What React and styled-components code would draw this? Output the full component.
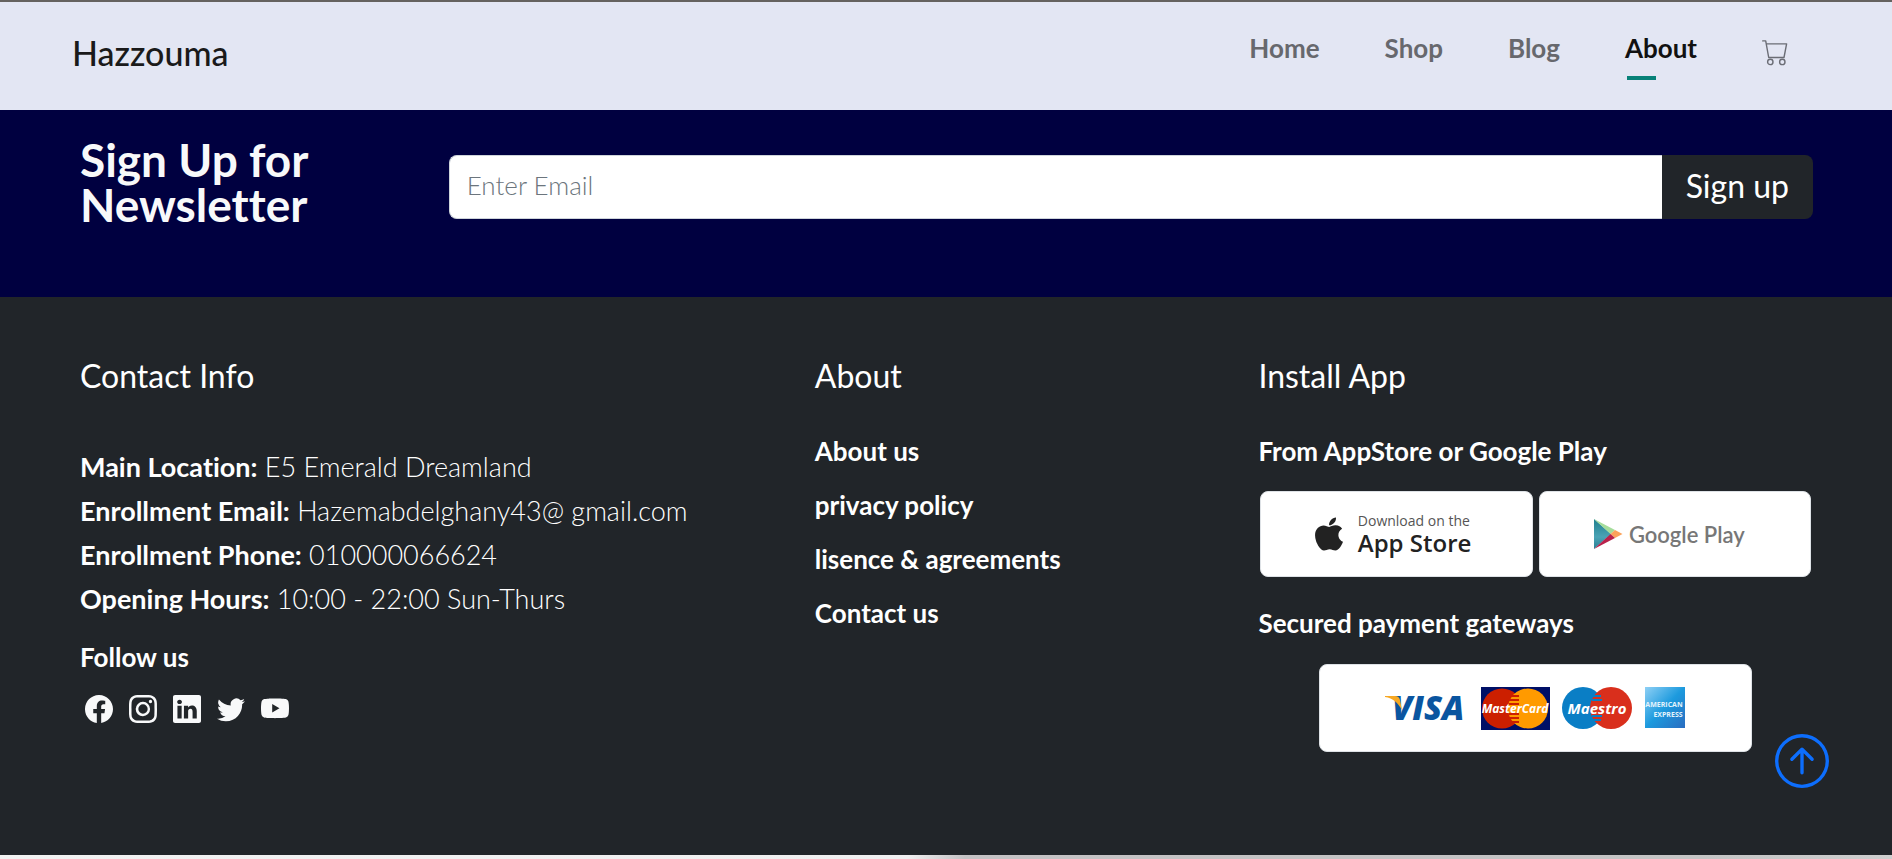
import React from 'react';
import styled, { createGlobalStyle } from 'styled-components';
import { BsFacebook, BsInstagram, BsLinkedin, BsTwitter, BsYoutube, BsArrowUpCircle } from 'react-icons/bs';
import { FaApple } from 'react-icons/fa';

const GlobalStyle = createGlobalStyle`
  *, *::before, *::after { box-sizing: border-box; }
  body {
    margin: 0;
    background: #212529;
    color: #fff;
    font-family: Lato, "Liberation Sans", sans-serif;
    font-size: 26px;
    font-variant-ligatures: none;
  }
  h1, h2, h3, p, ul { margin: 0; padding: 0; font-size: inherit; font-weight: inherit; }
  ul { list-style: none; }
  a { color: inherit; text-decoration: none; }
  button, input { font-family: inherit; }
`;

const Header = styled.header`
  display: flex;
  align-items: center;
  justify-content: space-between;
  padding: 26px 104px 32px 72px;
  border-top: 2px solid #65625f;
  background: #e3e6f3;
`;

const Brand = styled.a`
  color: #1a1a1a;
  font-size: 34px;
  font-weight: 500;
  line-height: 50px;
`;

const Nav = styled.nav`
  display: flex;
  align-items: center;
  gap: 65px;
`;

const NavLink = styled.a`
  position: relative;
  padding-bottom: 10px;
  color: ${(p) => (p.$active ? '#111' : '#67686d')};
  font-weight: 700;
  line-height: 40px;

  &::after {
    content: '';
    display: ${(p) => (p.$active ? 'block' : 'none')};
    position: absolute;
    left: 2px;
    bottom: -2px;
    width: 29px;
    height: 4px;
    background: #088178;
  }
`;

const CartLink = styled.a`
  display: flex;
  color: #6b6d75;
`;

const Newsletter = styled.section`
  display: grid;
  grid-template-columns: 10fr 37fr;
  align-items: start;
  padding: 27px 79px 70px 80px;
  background: #000040;
`;

const NewsletterTitle = styled.h1`
  color: #f8f9fa;
  font-size: 46px;
  font-weight: 700;
  line-height: 45px;
`;

const SignupForm = styled.form`
  display: flex;
  height: 64px;
  margin-top: 18px;
`;

const EmailInput = styled.input`
  flex: 1;
  min-width: 0;
  padding: 0 17px 4px;
  border: 1px solid #ced4da;
  border-right: 0;
  border-radius: 8px 0 0 8px;
  background: #fff;
  color: #212529;
  font-size: 26px;

  &::placeholder { color: #6c757d; font-weight: 300; opacity: 1; }
`;

const SignupButton = styled.button`
  padding: 0 24px 4px;
  border: 0;
  border-radius: 0 8px 8px 0;
  background: #212529;
  color: #fff;
  font-size: 32px;
`;

const Footer = styled.footer`
  display: grid;
  grid-template-columns: 53fr 32fr 40fr;
  padding: 60px 79px 103px 80px;
  background: #212529;
`;

const Heading = styled.h2`
  margin-bottom: ${(p) => (p.$spaced ? 50 : 29)}px;
  font-size: 32px;
  line-height: 38px;
`;

const ContactLine = styled.p`
  font-size: 27px;
  font-weight: 300;
  line-height: 44px;

  strong { font-weight: 700; }
`;

const FollowTitle = styled.h3`
  margin: 20px 0 22px;
  font-weight: 700;
  line-height: 32px;
`;

const Socials = styled.div`
  display: flex;
  gap: 16px;
  padding-left: 5px;

  a { display: flex; color: #f8f9fa; }
`;

const LinkItem = styled.li`
  font-weight: 700;
  line-height: 54px;
`;

const SubHeading = styled.h3`
  font-weight: 700;
  line-height: 54px;
`;

const Badges = styled.div`
  display: flex;
  gap: 6px;
  margin: 13px 2px 19px;
`;

const Badge = styled.a`
  display: flex;
  flex: 1;
  align-items: center;
  justify-content: center;
  gap: ${(p) => p.$gap}px;
  height: 86px;
  padding-right: 12px;
  border: 1px solid #dee2e6;
  border-radius: 8px;
  background: #fff;
  color: #222;
`;

const StoreText = styled.span`
  display: flex;
  flex-direction: column;
  font-family: "Open Sans", sans-serif;
`;

const StoreSmall = styled.span`
  color: #555;
  font-size: 14px;
  line-height: 18px;
`;

const StoreName = styled.span`
  font-size: 24px;
  font-weight: 600;
  line-height: 26px;
`;

const PlayName = styled.span`
  color: #777;
  font-size: 22px;
  font-weight: 600;
`;

const Payments = styled.div`
  display: flex;
  align-items: center;
  justify-content: center;
  width: 78%;
  height: 88px;
  margin: 14px auto 0;
  border: 1px solid #dee2e6;
  border-radius: 8px;
  background: #fff;
`;

const ToTop = styled.button`
  display: flex;
  position: fixed;
  right: 63px;
  bottom: 71px;
  padding: 0;
  border: 0;
  background: none;
  color: #0d6efd;
`;

const PageEdge = styled.div`
  height: 4px;
  background: linear-gradient(90deg, #f2f2f2 0%, #f0eff0 48%, #c4c2c4 51%, #c4c4c4 90%, #cecece 100%);
`;

function CartIcon() {
  return (
    <svg width="26" height="26" viewBox="0 0 26 26" fill="none" stroke="currentColor" strokeWidth="1.4" strokeLinecap="round" strokeLinejoin="round">
      <path d="M.7.9h3l3 16.6H22l2.6-13.6H4.3" />
      <circle cx="8.3" cy="21.9" r="2.7" />
      <circle cx="20.3" cy="21.9" r="2.7" />
    </svg>
  );
}

function PlayIcon() {
  return (
    <svg width="30" height="32" viewBox="0 0 30 32">
      <defs>
        <linearGradient id="playTeal" x1="0" y1="0" x2="0" y2="1">
          <stop offset="0" stopColor="#1f7f8d" />
          <stop offset="0.6" stopColor="#4aa3b5" />
          <stop offset="1" stopColor="#2b7f94" />
        </linearGradient>
      </defs>
      <path d="M1 1v30l17-15z" fill="url(#playTeal)" />
      <path d="M1 1l21 11-4.500 4z" fill="#a5dd9b" />
      <path d="M22 12l7.500 4-7.500 4-4.500-4z" fill="#fba35c" />
      <path d="M1 31l16.500-15 4.500 4z" fill="#b9214b" />
    </svg>
  );
}

const CardName = styled.text`
  fill: #fff;
  font-family: "Open Sans", sans-serif;
  font-size: ${(p) => p.$size}px;
  font-style: italic;
  font-weight: 700;
  text-anchor: middle;
`;

const VisaName = styled(CardName)`
  fill: #0a55a0;
  font-weight: 800;
  text-anchor: start;
`;

const AmexName = styled(CardName)`
  fill: #e4f3fc;
  font-style: normal;
`;

function CardLogos() {
  return (
    <svg width="302" height="44" viewBox="0 0 302 44" role="img" aria-label="Visa, MasterCard, Maestro, American Express">
      <defs>
        <linearGradient id="amex" x1="0" y1="0" x2="1" y2="1">
          <stop offset="0" stopColor="#8fd0f5" />
          <stop offset="0.5" stopColor="#1c9ade" />
          <stop offset="1" stopColor="#2a6cc0" />
        </linearGradient>
      </defs>
      <VisaName x="7" y="34" $size={33}>VISA</VisaName>
      <path d="M0 10h10c3 0 4 1 5 4l2 10C13 17 8 12 0 11z" fill="#f7a823" />

      <rect x="96" y="1" width="69" height="43" fill="#000f66" />
      <circle cx="117" cy="22.500" r="20" fill="#cc1f00" />
      <circle cx="143" cy="22.500" r="20" fill="#ff9a00" />
      <path d="M126 10h8M124 14h10M124 18h10M124 28h10M124 32h10M126 36h8" stroke="#cc1f00" strokeWidth="2" />
      <CardName x="130" y="27" $size={12}>MasterCard</CardName>

      <circle cx="198" cy="22" r="21" fill="#0a7ec5" />
      <circle cx="226" cy="22" r="21" fill="#d92f1c" />
      <path d="M208 10h8M207 14h10M207 30h10M208 34h8" stroke="#0a7ec5" strokeWidth="2" />
      <CardName x="212" y="28" $size={15}>Maestro</CardName>

      <rect x="260" y="1" width="40" height="41" fill="url(#amex)" />
      <AmexName x="279" y="21" $size={7}>AMERICAN</AmexName>
      <AmexName x="283" y="31" $size={7}>EXPRESS</AmexName>
    </svg>
  );
}

const navItems = ['Home', 'Shop', 'Blog', 'About'];
const contacts = [
  ['Main Location:', 'E5 Emerald Dreamland'],
  ['Enrollment Email:', 'Hazemabdelghany43@ gmail.com'],
  ['Enrollment Phone:', '010000066624'],
  ['Opening Hours:', '10:00 - 22:00 Sun-Thurs'],
];
const socials = [
  ['Facebook', BsFacebook],
  ['Instagram', BsInstagram],
  ['LinkedIn', BsLinkedin],
  ['Twitter', BsTwitter],
  ['YouTube', BsYoutube],
];
const aboutLinks = ['About us', 'privacy policy', 'lisence & agreements', 'Contact us'];

export default function App() {
  return (
    <>
      <GlobalStyle />
      <Header>
        <Brand href="#">Hazzouma</Brand>
        <Nav>
          {navItems.map((item) => (
            <NavLink key={item} href="#" $active={item === 'About'}>{item}</NavLink>
          ))}
          <CartLink href="#" aria-label="Cart"><CartIcon /></CartLink>
        </Nav>
      </Header>
      <Newsletter>
        <NewsletterTitle>Sign Up for<br />Newsletter</NewsletterTitle>
        <SignupForm onSubmit={(e) => e.preventDefault()}>
          <EmailInput type="email" placeholder="Enter Email" aria-label="Enter Email" />
          <SignupButton type="submit">Sign up</SignupButton>
        </SignupForm>
      </Newsletter>
      <Footer>
        <div>
          <Heading $spaced>Contact Info</Heading>
          {contacts.map(([label, value]) => (
            <ContactLine key={label}><strong>{label}</strong> {value}</ContactLine>
          ))}
          <FollowTitle>Follow us</FollowTitle>
          <Socials>
            {socials.map(([name, Icon]) => (
              <a key={name} href="#" aria-label={name}><Icon size={28} /></a>
            ))}
          </Socials>
        </div>
        <div>
          <Heading>About</Heading>
          <ul>
            {aboutLinks.map((text) => (
              <LinkItem key={text}><a href="#">{text}</a></LinkItem>
            ))}
          </ul>
        </div>
        <div>
          <Heading>Install App</Heading>
          <SubHeading>From AppStore or Google Play</SubHeading>
          <Badges>
            <Badge href="#" $gap={10}>
              <FaApple size={38} />
              <StoreText>
                <StoreSmall>Download on the</StoreSmall>
                <StoreName>App Store</StoreName>
              </StoreText>
            </Badge>
            <Badge href="#" $gap={6}>
              <PlayIcon />
              <PlayName>Google Play</PlayName>
            </Badge>
          </Badges>
          <SubHeading>Secured payment gateways</SubHeading>
          <Payments><CardLogos /></Payments>
        </div>
      </Footer>
      <PageEdge />
      <ToTop type="button" aria-label="Back to top"><BsArrowUpCircle size={54} /></ToTop>
    </>
  );
}
